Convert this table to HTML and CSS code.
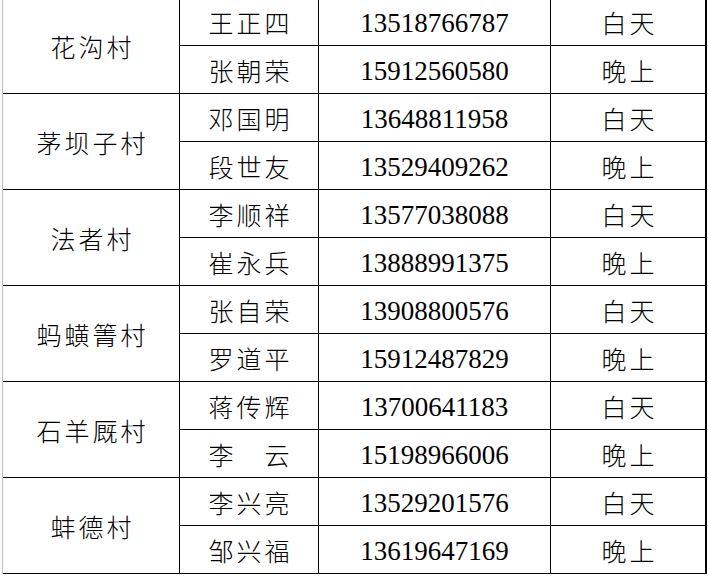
FILE: index.html
```html
<!DOCTYPE html>
<html lang="zh-CN">
<head>
<meta charset="utf-8">
<title>值班表</title>
<link rel="stylesheet" href="styles.css">
</head>
<body>
<div class="sheet">
  <div class="grid">
    <div class="cell village span2">花沟村</div>
    <div class="cell name">王正四</div><div class="cell phone">13518766787</div><div class="cell shift">白天</div>
    <div class="cell name">张朝荣</div><div class="cell phone">15912560580</div><div class="cell shift">晚上</div>

    <div class="cell village span2">茅坝子村</div>
    <div class="cell name">邓国明</div><div class="cell phone">13648811958</div><div class="cell shift">白天</div>
    <div class="cell name">段世友</div><div class="cell phone">13529409262</div><div class="cell shift">晚上</div>

    <div class="cell village span2">法者村</div>
    <div class="cell name">李顺祥</div><div class="cell phone">13577038088</div><div class="cell shift">白天</div>
    <div class="cell name">崔永兵</div><div class="cell phone">13888991375</div><div class="cell shift">晚上</div>

    <div class="cell village span2">蚂蟥箐村</div>
    <div class="cell name">张自荣</div><div class="cell phone">13908800576</div><div class="cell shift">白天</div>
    <div class="cell name">罗道平</div><div class="cell phone">15912487829</div><div class="cell shift">晚上</div>

    <div class="cell village span2">石羊厩村</div>
    <div class="cell name">蒋传辉</div><div class="cell phone">13700641183</div><div class="cell shift">白天</div>
    <div class="cell name">李　云</div><div class="cell phone">15198966006</div><div class="cell shift">晚上</div>

    <div class="cell village span2">蚌德村</div>
    <div class="cell name">李兴亮</div><div class="cell phone">13529201576</div><div class="cell shift">白天</div>
    <div class="cell name">邹兴福</div><div class="cell phone">13619647169</div><div class="cell shift">晚上</div>
  </div>
</div>
</body>
</html>
```
FILE: styles.css
```css
html, body {
  margin: 0;
  padding: 0;
  background: #ffffff;
}
body {
  width: 708px;
  height: 576px;
  overflow: hidden;
}
.sheet {
  margin-top: -3px;
  margin-left: 2px;
  border-left: 1px solid #b7bfd6;
  width: 704px;
}
.grid {
  display: grid;
  grid-template-columns: 176px 138px 231px 154px;
  grid-auto-rows: 47px;
  gap: 1px;
  background: #000000;
  padding: 1px 1px 1px 0;
  width: 703px;
}
.cell {
  background: #ffffff;
  display: flex;
  align-items: center;
  justify-content: center;
  color: #000000;
}
.span2 {
  grid-row: span 2;
}
.village, .name, .shift {
  font-family: "Noto Sans CJK SC", "Noto Sans", sans-serif;
  font-weight: 300;
  font-size: 25px;
  letter-spacing: 3px;
  padding-left: 3px;
  padding-top: 1px;
}
.phone {
  font-family: "Liberation Serif", "Times New Roman", serif;
  font-size: 27px;
  padding-top: 4px;
}
```
